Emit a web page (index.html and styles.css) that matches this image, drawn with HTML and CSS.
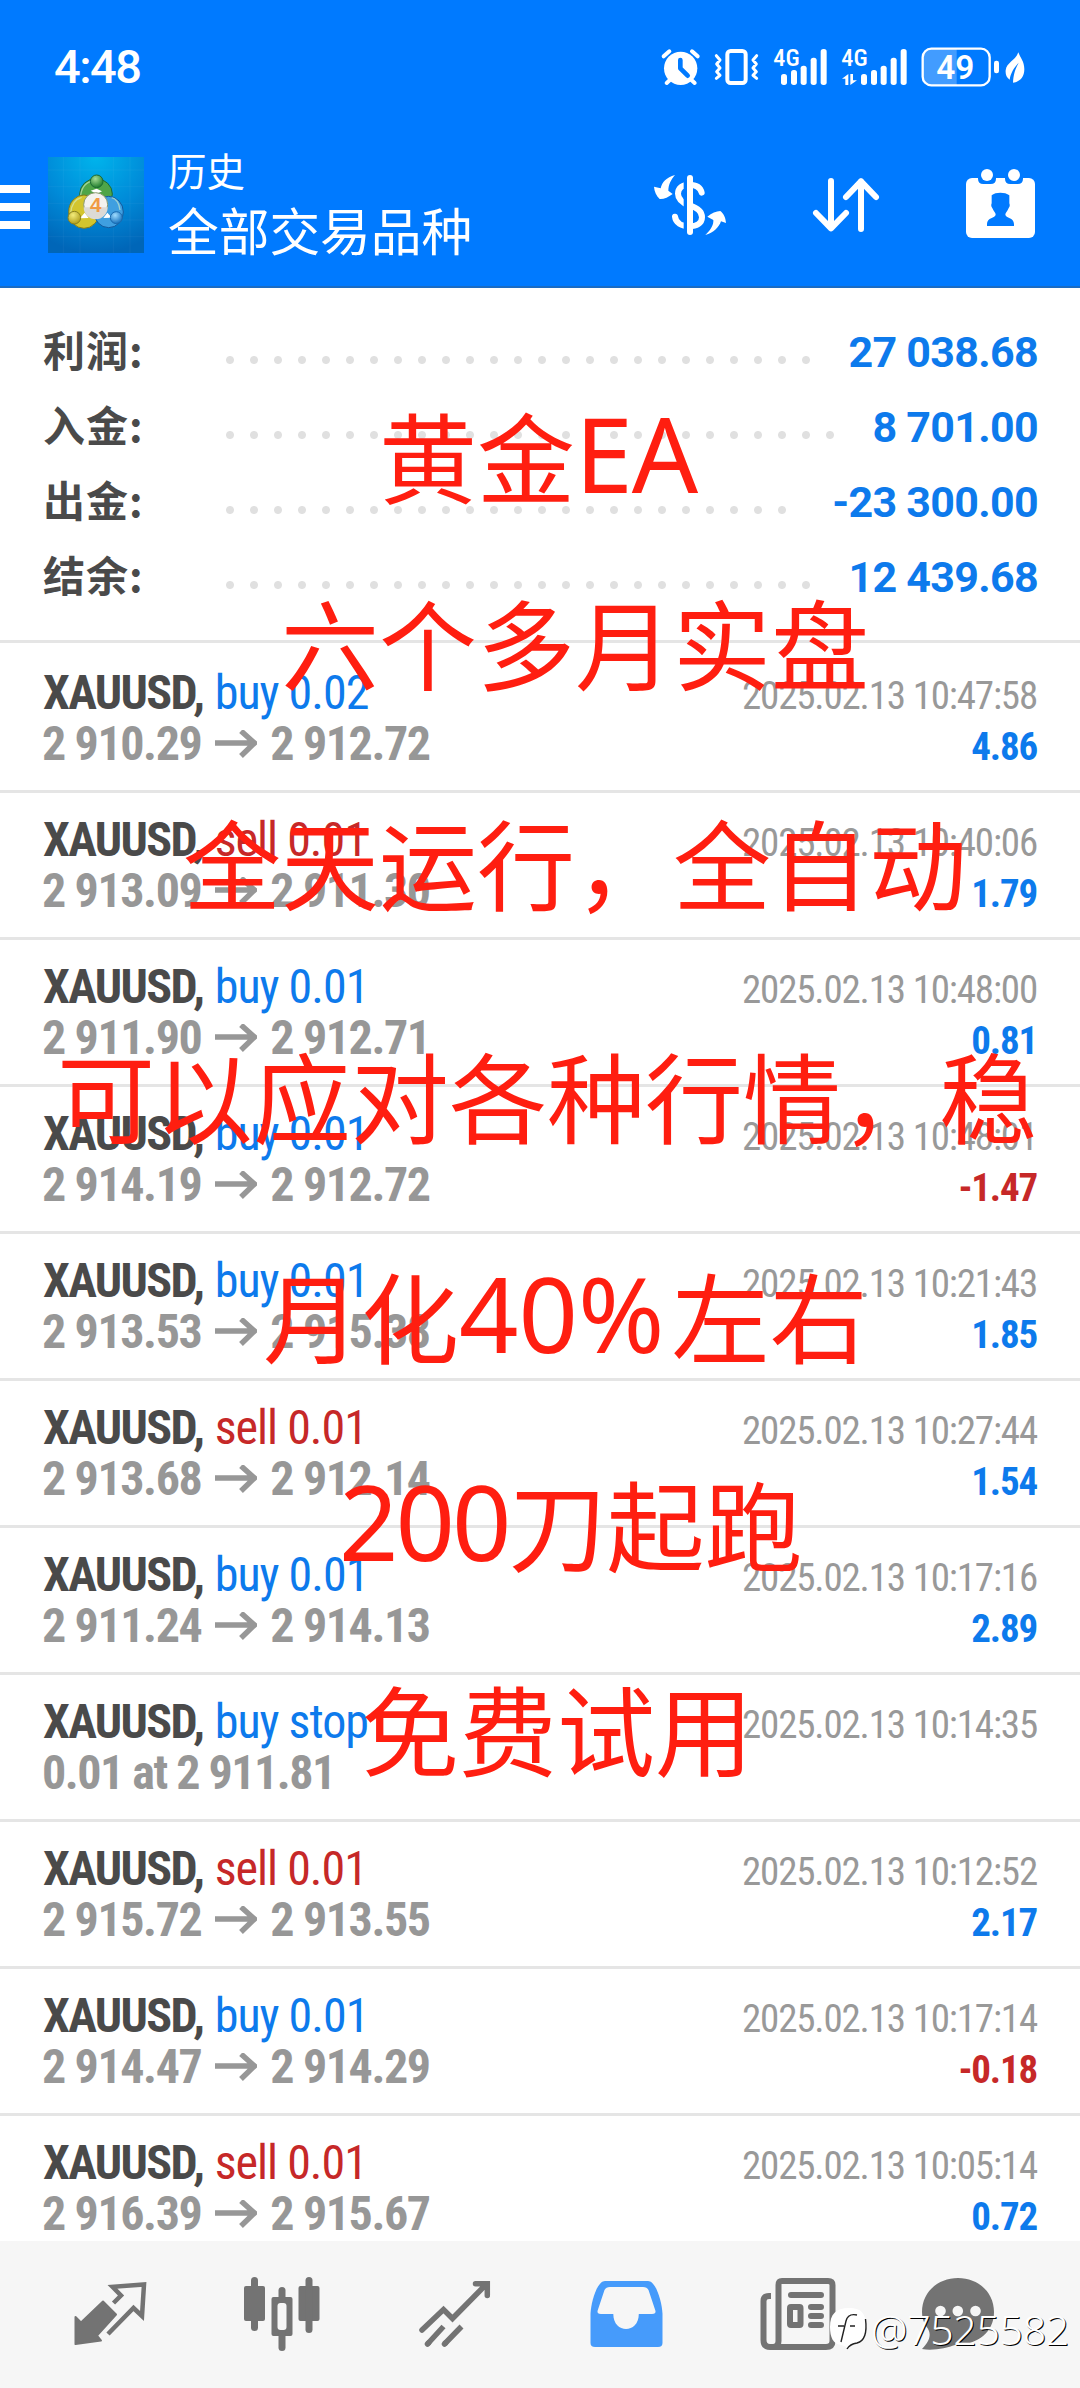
FILE: index.html
```
<!DOCTYPE html>
<html lang="zh-CN">
<head>
    <meta charset="UTF-8">
    <meta name="viewport" content="width=device-width, initial-scale=1.0">
    <title>历史</title>
    <link rel="stylesheet" href="styles.css">
</head>
<body>
    <div class="screen">
        <div class="status">
            <span class="time">4:48</span>
            <div class="status-icons">
                <!-- alarm -->
                <svg width="40" height="38" viewBox="0 0 120 114" fill="none" stroke="#fff" stroke-linecap="round">
                    <circle cx="59" cy="61" r="50" fill="#fff" stroke="none"/>
                    <path d="M8 25L25 10M93 10L110 25M29 94L17 105M89 94L101 105" stroke-width="12"/>
                    <path d="M58 36V61L80 83" stroke="#007aff" stroke-width="14" stroke-linejoin="round"/>
                </svg>
                <!-- vibrate -->
                <svg class="vibrate" width="47" height="38" viewBox="0 0 141 114" fill="none" stroke="#fff" stroke-width="12" stroke-linecap="round" stroke-linejoin="round">
                    <rect x="43" y="9" width="55" height="96" rx="10"/>
                    <path d="M10 23L21 36L11 48L21 60L11 71L21 82L10 91M131 23L120 36L130 48L120 60L130 71L120 82L131 91" stroke-width="9"/>
                </svg>
                <svg width="55" height="38" viewBox="0 0 165 114" fill="#fff">
                    <text class="net" x="1" y="55" textLength="79" lengthAdjust="spacingAndGlyphs">4G</text>
                    <rect x="24" y="78" width="18" height="33" rx="8"/>
                    <rect x="54" y="66" width="18" height="45" rx="8"/>
                    <rect x="83" y="53" width="18" height="58" rx="8"/>
                    <rect x="113" y="29" width="18" height="82" rx="8"/>
                    <rect x="143" y="3" width="18" height="108" rx="8"/>
                </svg>
                <svg width="67" height="38" viewBox="0 0 201 114" fill="#fff">
                    <text class="net" x="1" y="55" textLength="79" lengthAdjust="spacingAndGlyphs">4G</text>
                    <path d="M22 78V111H13V92H3ZM28 78H36V97H48L28 111Z"/>
                    <rect x="60" y="78" width="18" height="33" rx="8"/>
                    <rect x="90" y="66" width="18" height="45" rx="8"/>
                    <rect x="119" y="53" width="18" height="58" rx="8"/>
                    <rect x="149" y="29" width="18" height="82" rx="8"/>
                    <rect x="179" y="3" width="18" height="108" rx="8"/>
                </svg>
                <!-- battery -->
                <svg width="79" height="40" viewBox="0 0 237 120">
                    <path d="M30 5H107V115H30Q5 115 5 90V30Q5 5 30 5Z" fill="#fff" fill-opacity=".26"/>
                    <rect x="5" y="5" width="201" height="110" rx="26" fill="none" stroke="#fff" stroke-width="7"/>
                    <rect x="219" y="41" width="15" height="38" rx="7" fill="#fff"/>
                    <text class="level" x="103" y="97" text-anchor="middle">49</text>
                </svg>
                <svg class="leaf" width="20" height="31" viewBox="0 0 60 93">
                    <path d="M40 1C46 18 58 28 58 52C58 78 42 90 24 92C25 66 32 48 41 32C28 46 17 62 14 83C4 76 1 66 2 55C5 30 32 26 40 1Z" fill="#fff"/>
                </svg>
            </div>
        </div>

        <div class="appbar">
            <div class="menu"><i></i><i></i><i></i></div>
            <svg class="logo" width="96" height="96" viewBox="24 21 288 288">
                <defs>
                    <radialGradient id="sky" cx=".5" cy="0" r="1"><stop offset="0" stop-color="#00b4ec"/><stop offset=".55" stop-color="#008ad8"/><stop offset="1" stop-color="#0066b8"/></radialGradient>
                    <radialGradient id="green" cx=".4" cy=".3" r=".7"><stop offset="0" stop-color="#a5dc96"/><stop offset="1" stop-color="#1f7d2c"/></radialGradient>
                    <radialGradient id="gold" cx=".4" cy=".3" r=".7"><stop offset="0" stop-color="#f3ec7c"/><stop offset="1" stop-color="#b09e1c"/></radialGradient>
                    <radialGradient id="blue" cx=".4" cy=".3" r=".7"><stop offset="0" stop-color="#9fdcff"/><stop offset="1" stop-color="#1470bd"/></radialGradient>
                </defs>
                <rect x="24" y="21" width="288" height="288" fill="url(#sky)"/>
                <path d="M24 60H312M24 110H312M24 160H312M24 210H312M24 260H312M70 21V309M120 21V309M220 21V309M270 21V309" stroke="#fff" stroke-opacity=".04" stroke-width="3"/>
                <g stroke-width="3">
                    <ellipse cx="168" cy="132" rx="49" ry="46" fill="#4fa548" stroke="#1c6b35"/>
                    <ellipse cx="132" cy="185" rx="46" ry="50" fill="#d3c52e" stroke="#7f7a20"/>
                    <ellipse cx="206" cy="186" rx="44" ry="47" fill="#3f9fe0" stroke="#13599c"/>
                    <path d="M122 135Q128 95 165 92M92 190Q95 150 125 142M240 180Q236 148 215 143" fill="none" stroke="#d9f0c8" stroke-opacity=".6" stroke-width="4"/>
                    <path d="M120 205L134 188L146 204ZM216 203L202 188L190 204ZM152 122L170 116L186 124L170 132Z" fill="#fff"/>
                    <circle cx="170" cy="94" r="19" fill="url(#green)" stroke="#1c6b35"/>
                    <circle cx="103" cy="203" r="19" fill="url(#gold)" stroke="#8a8220"/>
                    <circle cx="229" cy="203" r="18" fill="url(#blue)" stroke="#1a6bb0"/>
                    <circle cx="167" cy="164" r="36" fill="#f4f2ee" stroke="#8a9a70"/>
                </g>
                <path d="M131 172H203A36 36 0 0 1 131 172Z" fill="#dcdad6"/>
                <text class="four" x="167" y="186" text-anchor="middle">4</text>
            </svg>
            <div class="titles">
                <p class="small">历史</p>
                <p class="large">全部交易品种</p>
            </div>
            <div class="actions">
                <svg width="74" height="62" viewBox="0 0 222 186" fill="none" stroke="#fff" stroke-linecap="round">
                    <path d="M146 56C142 38 126 32 108 32C88 32 75 42 75 59C75 76 92 88 110 95C132 101 147 112 147 130C147 148 130 157 110 157C85 157 68 146 66 128" stroke-width="18"/>
                    <path d="M97 10V176" stroke="#007aff" stroke-width="10" stroke-linecap="butt"/>
                    <path d="M111 12V174" stroke-width="18"/>
                    <path d="M66 3C40 10 27 25 23 43L3 38C4 52 10 66 20 75C32 76 46 70 59 60L46 50C46 32 54 17 66 3ZM157 183C176 165 182 150 181 138L163 128C176 118 190 111 202 111C212 118 218 132 219 147L204 142C198 160 182 176 157 183Z" fill="#fff" stroke="none"/>
                </svg>
                <svg width="68" height="56" viewBox="0 0 204 168" fill="none" stroke="#fff" stroke-width="18" stroke-linecap="round" stroke-linejoin="round">
                    <path d="M57 12V154M12 108L57 154L102 108M147 156V13M102 60L147 13L192 60"/>
                </svg>
                <svg class="calendar" width="71" height="71" viewBox="0 0 213 213">
                    <rect x="3" y="30" width="207" height="180" rx="18" fill="#fff"/>
                    <path d="M39 26H93V32Q93 48 77 48H55Q39 48 39 32ZM120 26H174V32Q174 48 158 48H136Q120 48 120 32ZM80 82C92 72 120 72 133 82V106C136 114 133 118 130 122C127 130 121 134 121 140C122 150 147 148 147 168V174H66V168C66 148 91 150 92 140C92 134 86 130 83 122C80 118 77 114 80 106Z" fill="#007aff"/>
                    <circle cx="66" cy="21" r="18" fill="#fff"/>
                    <circle cx="147" cy="21" r="18" fill="#fff"/>
                </svg>
            </div>
        </div>

        <div class="summary">
            <div class="sum"><span class="name">利润:</span><span class="dots"></span><span class="total">27 038.68</span></div>
            <div class="sum"><span class="name">入金:</span><span class="dots"></span><span class="total">8 701.00</span></div>
            <div class="sum"><span class="name">出金:</span><span class="dots"></span><span class="total">-23 300.00</span></div>
            <div class="sum"><span class="name">结余:</span><span class="dots"></span><span class="total">12 439.68</span></div>
        </div>

        <svg class="defs" width="0" height="0">
            <symbol id="arrow" viewBox="0 0 42 30"><path d="M0 13H39M26 1L39.500 13L26 26" fill="none" stroke="currentColor" stroke-width="5.500"/></symbol>
        </svg>

        <div class="deals">
            <div class="deal">
                <div class="line"><p><b>XAUUSD, </b><span class="buy">buy 0.02</span></p><time>2025.02.13 10:47:58</time></div>
                <div class="line"><p class="price">2 910.29<svg><use href="#arrow"/></svg>2 912.72</p><em class="plus">4.86</em></div>
            </div>
            <div class="deal">
                <div class="line"><p><b>XAUUSD, </b><span class="sell">sell 0.01</span></p><time>2025.02.13 10:40:06</time></div>
                <div class="line"><p class="price">2 913.09<svg><use href="#arrow"/></svg>2 911.30</p><em class="plus">1.79</em></div>
            </div>
            <div class="deal">
                <div class="line"><p><b>XAUUSD, </b><span class="buy">buy 0.01</span></p><time>2025.02.13 10:48:00</time></div>
                <div class="line"><p class="price">2 911.90<svg><use href="#arrow"/></svg>2 912.71</p><em class="plus">0.81</em></div>
            </div>
            <div class="deal">
                <div class="line"><p><b>XAUUSD, </b><span class="buy">buy 0.01</span></p><time>2025.02.13 10:48:01</time></div>
                <div class="line"><p class="price">2 914.19<svg><use href="#arrow"/></svg>2 912.72</p><em class="minus">-1.47</em></div>
            </div>
            <div class="deal">
                <div class="line"><p><b>XAUUSD, </b><span class="buy">buy 0.01</span></p><time>2025.02.13 10:21:43</time></div>
                <div class="line"><p class="price">2 913.53<svg><use href="#arrow"/></svg>2 915.38</p><em class="plus">1.85</em></div>
            </div>
            <div class="deal">
                <div class="line"><p><b>XAUUSD, </b><span class="sell">sell 0.01</span></p><time>2025.02.13 10:27:44</time></div>
                <div class="line"><p class="price">2 913.68<svg><use href="#arrow"/></svg>2 912.14</p><em class="plus">1.54</em></div>
            </div>
            <div class="deal">
                <div class="line"><p><b>XAUUSD, </b><span class="buy">buy 0.01</span></p><time>2025.02.13 10:17:16</time></div>
                <div class="line"><p class="price">2 911.24<svg><use href="#arrow"/></svg>2 914.13</p><em class="plus">2.89</em></div>
            </div>
            <div class="deal">
                <div class="line"><p><b>XAUUSD, </b><span class="buy">buy stop</span></p><time>2025.02.13 10:14:35</time></div>
                <div class="line"><p class="price order">0.01 at 2 911.81</p></div>
            </div>
            <div class="deal">
                <div class="line"><p><b>XAUUSD, </b><span class="sell">sell 0.01</span></p><time>2025.02.13 10:12:52</time></div>
                <div class="line"><p class="price">2 915.72<svg><use href="#arrow"/></svg>2 913.55</p><em class="plus">2.17</em></div>
            </div>
            <div class="deal">
                <div class="line"><p><b>XAUUSD, </b><span class="buy">buy 0.01</span></p><time>2025.02.13 10:17:14</time></div>
                <div class="line"><p class="price">2 914.47<svg><use href="#arrow"/></svg>2 914.29</p><em class="minus">-0.18</em></div>
            </div>
            <div class="deal">
                <div class="line"><p><b>XAUUSD, </b><span class="sell">sell 0.01</span></p><time>2025.02.13 10:05:14</time></div>
                <div class="line"><p class="price">2 916.39<svg><use href="#arrow"/></svg>2 915.67</p><em class="plus">0.72</em></div>
            </div>
        </div>

        <div class="tabs">
            <a class="tab">
                <svg width="76" height="68" viewBox="0 0 76 68">
                    <path d="M3.500 64L3.500 37L9 42.500L31 21.500L44 34.500L25 55.500L29 60.500Z" fill="#737373" stroke="#737373" stroke-width="2" stroke-linejoin="round"/>
                    <path d="M41.500 23L49 15.500L40.500 6.800L72 4.500L70 36L61.500 28L36 54" fill="none" stroke="#737373" stroke-width="4.500"/>
                </svg>
            </a>
            <a class="tab">
                <svg width="76" height="76" viewBox="0 0 76 76" fill="#737373">
                    <rect x="0" y="10" width="21" height="35" rx="2"/>
                    <rect x="7" y="1" width="7" height="54" rx="3.500"/>
                    <rect x="27.500" y="21" width="21" height="39" rx="2"/>
                    <rect x="34.500" y="11" width="7" height="20" rx="3.500"/>
                    <rect x="34.500" y="50" width="7" height="25" rx="3.500"/>
                    <rect x="33.500" y="27" width="9" height="27" rx="3" fill="#f6f6f6"/>
                    <rect x="54.500" y="10" width="21" height="35" rx="2"/>
                    <rect x="61.500" y="1" width="7" height="56" rx="3.500"/>
                </svg>
            </a>
            <a class="tab">
                <svg width="75" height="70" viewBox="0 0 75 70" fill="none" stroke="#737373" stroke-width="5.500">
                    <path d="M5 51L26.500 30.500L35.500 39.500L69 5.500M58.500 4.700H70.300V16.500" stroke-linecap="round"/>
                    <path d="M26.500 47.500L10.500 65M44.500 47.500L27.500 65"/>
                    <path d="M11.500 64L10.500 65M28.500 64L27.500 65" stroke-linecap="round"/>
                </svg>
            </a>
            <a class="tab">
                <svg width="73" height="68" viewBox="0 0 73 68">
                    <path d="M15 1H58C66 1 72 22 72.500 34V63Q72.500 67 68 67H5Q.5 67 .5 63V34C1 22 7 1 15 1Z" fill="#469bfb"/>
                    <path d="M20 7H53Q57 7 58.500 10L65.500 31Q66 34 62 34H48.800C48.800 54 23.300 54 23.300 34H11Q7 34 7.500 31L14.500 10Q16 7 20 7Z" fill="#f6f6f6"/>
                </svg>
            </a>
            <a class="tab">
                <svg width="76" height="74" viewBox="0 0 76 74" fill="none" stroke="#737373" stroke-width="6">
                    <path d="M11 19H9Q3.500 19 3.500 24V63Q3.500 70 10 70H66Q72.500 70 72.500 64V8Q72.500 4 68 4H22Q18.500 4 18.500 8V64Q18.500 70 13 70"/>
                    <path d="M31 18H61M51 30H61M51 39H61M51 48H61" stroke-linecap="round"/>
                    <rect x="30" y="30" width="10.500" height="18" rx="1"/>
                </svg>
            </a>
            <a class="tab chat">
                <svg width="74" height="74" viewBox="0 0 74 74" fill="#737373">
                    <path d="M37 1C57 1 73 15 73 35C73 55 57 68 34 68C26 71 12 74 1 72C8 65 12 57 5 49C2 44 1 40 1 35C1 15 17 1 37 1Z"/>
                    <circle cx="19.500" cy="34" r="5.300" fill="#f6f6f6"/>
                    <circle cx="36.800" cy="34" r="5.300" fill="#f6f6f6"/>
                    <circle cx="54.500" cy="34" r="5.300" fill="#f6f6f6"/>
                </svg>
            </a>
        </div>

        <!-- promo text over the list -->
        <div class="promo">
            <p class="p1">黄金<span>EA</span></p>
            <p class="p2">六个多月实盘</p>
            <p class="p3">全天运行，全自动</p>
            <p class="p4">可以应对各种行情，稳</p>
            <p class="p5">月化<span>40%</span>左右</p>
            <p class="p6"><span>200</span>刀起跑</p>
            <p class="p7">免费试用</p>
        </div>

        <div class="mark">
            <svg width="40" height="44" viewBox="0 0 40 44">
                <path d="M20 1C33 1 37 7 37 20C37 33 32 36 25 38Q21 39 19 43Q18 39 12 38C4 37 1 30 1 20C1 7 7 1 20 1Z" fill="#fff"/>
                <path d="M36.500 12C38 24 36 34 28 36Q21 37 18 42M28 8Q19 6 17 14L12 35M9 19H15M21 19H26" fill="none" stroke="#222" stroke-width="1.400"/>
            </svg>
            <span>@7525582</span>
        </div>
    </div>
</body>
</html>
```
FILE: styles.css
```
* {
    padding: 0;
    margin: 0;
    box-sizing: border-box;
}

body {
    width: 1080px;
    background: #fff;
    font-family: Roboto, "Noto Sans CJK SC", sans-serif;
}

.screen {
    position: relative;
    display: flex;
    flex-direction: column;
    height: 2388px;
    overflow: hidden;
}

svg {
    display: block;
    flex: none;
    overflow: visible;
}

.defs {
    position: absolute;
}

/* status bar */
.status {
    display: flex;
    align-items: center;
    justify-content: space-between;
    flex: none;
    height: 134px;
    padding: 0 55px 0 54px;
    background: #007aff;
    color: #fff;
}

.time {
    font-size: 47px;
    font-weight: 500;
    letter-spacing: -1.5px;
    line-height: 60px;
}

.status-icons {
    display: flex;
    align-items: center;
    gap: 13px;
}

.vibrate {
    margin-left: -1px;
}

.leaf {
    margin-left: -8px;
}

.net {
    font: 500 74px "Roboto Condensed", Roboto, sans-serif;
}

.level {
    font: 600 100px Roboto, sans-serif;
    fill: #fff;
}

/* app bar */
.appbar {
    display: flex;
    align-items: center;
    flex: none;
    height: 154px;
    padding: 0 44px 10px 0;
    background: #007aff;
    border-bottom: 2px solid #1a6cc4;
    color: #fff;
}

.menu {
    display: flex;
    flex-direction: column;
    gap: 10px;
    width: 30px;
    margin-top: 4px;
}

.menu i {
    height: 8px;
    background: #fff;
}

.logo {
    margin-left: 18px;
    overflow: hidden;
}

.four {
    font: bold 62px "Liberation Sans", sans-serif;
    fill: #f09a45;
}

.titles {
    margin: -12px 0 0 24px;
    font-family: "Noto Sans CJK SC", sans-serif;
    line-height: 60px;
}

.small {
    font-size: 38.5px;
}

.large {
    font-size: 50.7px;
}

.actions {
    display: flex;
    align-items: center;
    gap: 85px;
    margin-left: auto;
}

.calendar {
    margin-top: -3px;
}

/* totals */
.summary {
    flex: none;
    height: 352px;
    padding: 23px 42px 0 43px;
}

.sum {
    display: flex;
    align-items: baseline;
    height: 75px;
    line-height: 75px;
    font-size: 42px;
    font-weight: bold;
}

.name {
    width: 175px;
    font-family: "Noto Sans CJK SC", sans-serif;
    letter-spacing: 1px;
    color: #4a4a4a;
}

.dots {
    flex: 1;
    align-self: stretch;
    background: radial-gradient(circle, #e0e0e0 3.5px, transparent 4.5px) 0 37px / 24px 24px repeat-x;
}

.total {
    margin-left: 31px;
    font-size: 43px;
    letter-spacing: -0.7px;
    color: #0d7aec;
}

/* deals */
.deals {
    flex: 1;
    min-height: 0;
    overflow: hidden;
    font-family: "Roboto Condensed", Roboto, sans-serif;
}

.deal {
    height: 147px;
    padding: 21px 43px 0;
    border-top: 3px solid #e5e5e5;
}

.deal:first-child {
    height: 150px;
    padding-top: 24px;
}

.line {
    display: flex;
    align-items: baseline;
    justify-content: space-between;
    height: 51px;
    line-height: 51px;
    font-size: 48px;
    white-space: pre;
}

.line b {
    letter-spacing: -1.65px;
    color: #4a4a4a;
}

.buy,
.sell {
    margin-left: 2px;
    letter-spacing: -1px;
}

.buy,
.plus {
    color: #0d7aec;
}

.sell,
.minus {
    color: #c62828;
}

.line time {
    font-size: 39px;
    letter-spacing: -1.17px;
    color: #999;
}

.line em {
    font-size: 39px;
    font-style: normal;
    font-weight: bold;
    letter-spacing: -1.2px;
}

.price {
    margin-left: -1px;
    font-weight: bold;
    letter-spacing: -1.4px;
    color: #979797;
}

.order {
    letter-spacing: -1.5px;
}

.price svg {
    display: inline;
    width: 42px;
    height: 30px;
    margin: 0 13px 0 14px;
    vertical-align: baseline;
}

/* bottom tabs */
.tabs {
    display: flex;
    align-items: center;
    gap: 96px;
    flex: none;
    height: 147px;
    padding: 0 0 2px 72px;
    background: #f6f6f6;
}

.tab {
    display: flex;
    justify-content: center;
    flex: none;
    width: 76px;
}

.chat {
    margin-left: -12px;
}

/* promo text */
.promo p {
    position: absolute;
    font: 98px/98px "Noto Sans CJK SC", sans-serif;
    color: #ff1e10;
    white-space: nowrap;
}

.promo span {
    position: relative;
    top: -3px;
    font: 104px/0 "Noto Sans", sans-serif;
}

.promo .p1 { left: 379px; top: 404px; }
.promo .p2 { left: 281px; top: 591px; }
.promo .p3 { left: 183px; top: 811px; }
.promo .p4 { left: 57px; top: 1044px; }
.promo .p5 { left: 263px; top: 1264px; }
.promo .p6 { left: 339px; top: 1472px; }
.promo .p7 { left: 361px; top: 1677px; }

.promo .p1 span { letter-spacing: -1px; }
.promo .p5 span { margin-right: 7px; }
.promo .p6 span { letter-spacing: -3px; }

.mark {
    position: absolute;
    left: 829px;
    top: 2307px;
    display: flex;
    align-items: center;
    gap: 2px;
    color: #fff;
}

.mark span {
    font: 300 41px/44px "Noto Sans", sans-serif;
    letter-spacing: -0.3px;
    text-shadow: 1px 1px 0 #000;
}
```
